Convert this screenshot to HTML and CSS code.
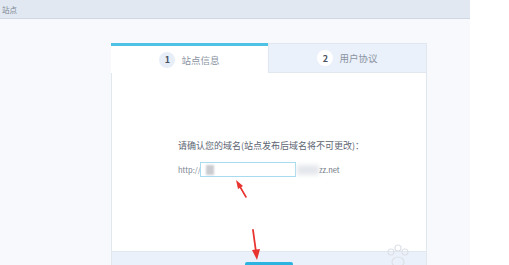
FILE: index.html
```html
<!DOCTYPE html>
<html lang="zh-CN">
<head>
    <meta charset="UTF-8">
    <title>创建站点</title>
    <link rel="stylesheet" href="styles.css">
</head>
<body>
    <div class="app">
        <div class="topbar">
            <span class="crumb">站点</span>
        </div>

        <div class="main">
            <div class="card">
                <div class="tabs">
                    <div class="tab active">
                        <span class="step">1</span>
                        <span class="tab-label">站点信息</span>
                    </div>
                    <div class="tab">
                        <span class="step">2</span>
                        <span class="tab-label">用户协议</span>
                    </div>
                </div>

                <div class="card-body">
                    <p class="prompt">请确认您的域名(站点发布后域名将不可更改)：</p>
                    <div class="domain-row">
                        <span class="scheme">http://</span>
                        <div class="domain-input">
                            <span class="blur-block"></span>
                        </div>
                        <span class="blur-text"></span>
                        <span class="suffix">zz.net</span>
                    </div>
                </div>

                <div class="card-footer">
                    <button class="next-btn"></button>
                </div>
            </div>
        </div>
    </div>

    <!-- annotation arrows + watermark -->
    <svg class="overlay" width="509" height="265" viewBox="0 0 509 265">
        <line x1="246" y1="197" x2="239" y2="185" stroke="#e8332f" stroke-width="1.6" stroke-linecap="round"/>
        <polygon points="236,180 243,186 238,189" fill="#e8332f"/>
        <line x1="253" y1="230" x2="256" y2="252" stroke="#e8332f" stroke-width="1.8" stroke-linecap="round"/>
        <polygon points="257,260 252,250 260,249" fill="#e8332f"/>
        <g fill="none" stroke="#dde1e7" stroke-width="1.2">
            <circle cx="391" cy="252" r="3"/>
            <circle cx="398" cy="248" r="3"/>
            <circle cx="405" cy="252" r="3"/>
            <ellipse cx="398" cy="262" rx="6" ry="5"/>
        </g>
    </svg>
</body>
</html>
```

FILE: styles.css
```css
* {
    margin: 0;
    padding: 0;
    box-sizing: border-box;
    font-family: 'Noto Sans CJK SC', 'Noto Sans', sans-serif;
}

body {
    width: 509px;
    height: 265px;
    overflow: hidden;
    background-color: #fff;
    position: relative;
}

.app {
    width: 470px;
    height: 265px;
    display: flex;
    flex-direction: column;
    background-color: #f7f9fc;
    overflow: hidden;
}

.topbar {
    flex-shrink: 0;
    height: 19px;
    background-color: #e1e8f1;
    border-bottom: 1px solid #cfd8e3;
    display: flex;
    align-items: center;
}

.crumb {
    font-size: 7.5px;
    color: #7d8794;
    margin-left: 2px;
}

.main {
    flex: 1;
    min-height: 0;
    padding: 24px 0 0 111px;
}

.card {
    width: 316px;
    height: 240px;
    background-color: #fff;
    border: 1px solid #e1e7ef;
    border-top: none;
    display: flex;
    flex-direction: column;
}

.tabs {
    flex-shrink: 0;
    display: flex;
    height: 30px;
}

.tab {
    flex: 1;
    display: flex;
    align-items: center;
    justify-content: center;
    gap: 6px;
    background-color: #ebf1fa;
    border-top: 1px solid #e1e7ef;
    border-bottom: 1px solid #e1e7ef;
    border-left: 1px solid #e1e7ef;
}

.tab.active {
    background-color: #fff;
    border-top: 3px solid #4ec2e4;
    border-bottom: none;
    border-left: none;
    margin-left: -1px;
}

.step {
    width: 16px;
    height: 16px;
    border-radius: 50%;
    background-color: #fff;
    color: #4a5260;
    font-size: 9px;
    font-weight: 700;
    display: flex;
    align-items: center;
    justify-content: center;
}

.tab.active .step {
    background-color: #e8eef8;
}

.tab-label {
    font-size: 9.5px;
    color: #8a93a1;
}

.card-body {
    flex-shrink: 0;
    height: 178px;
    display: flex;
    flex-direction: column;
    padding: 66px 0 0 66px;
}

.prompt {
    font-size: 9px;
    color: #5d6572;
    line-height: 14px;
}

.domain-row {
    display: flex;
    align-items: center;
    margin-top: 9px;
    height: 15px;
}

.scheme {
    font-size: 7.5px;
    color: #7a828e;
    width: 22px;
}

.domain-input {
    width: 96px;
    height: 15px;
    border: 1px solid #a8dbef;
    display: flex;
    align-items: center;
    padding-left: 5px;
}

.blur-block {
    width: 8px;
    height: 10px;
    background-color: #c9cbcf;
    filter: blur(1px);
}

.blur-text {
    width: 22px;
    height: 10px;
    margin-left: 1px;
    background-color: #e4e7ec;
    filter: blur(2px);
}

.suffix {
    font-size: 7.5px;
    color: #6d7580;
}

.card-footer {
    flex: 1;
    background-color: #ebf1fa;
    border-top: 1px solid #e1e7ef;
    padding: 10px 0 0 133px;
    overflow: hidden;
}

.next-btn {
    display: block;
    width: 48px;
    height: 26px;
    border: none;
    border-radius: 2px;
    background-color: #2db3e0;
}

.overlay {
    position: absolute;
    top: 0;
    left: 0;
    pointer-events: none;
}
```
